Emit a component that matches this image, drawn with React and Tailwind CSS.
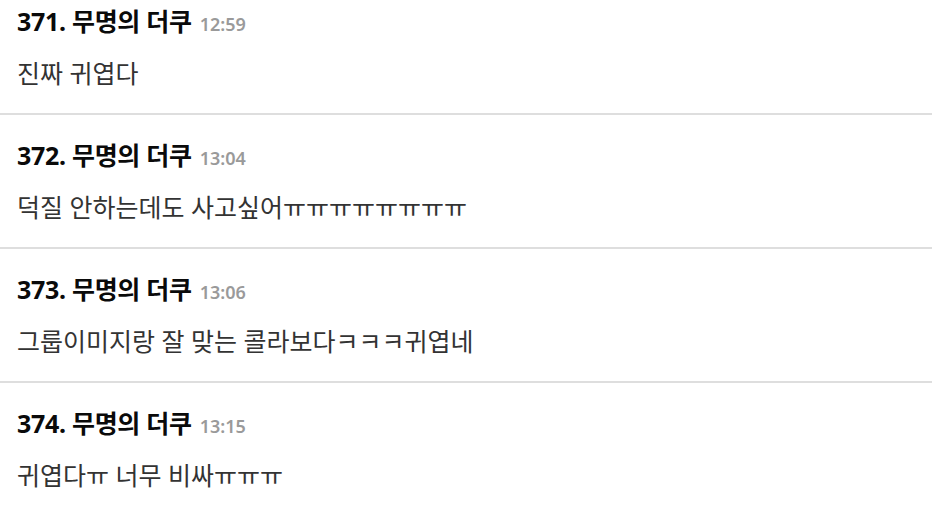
const comments = [
  { no: 371, name: "무명의 더쿠", time: "12:59", text: "진짜 귀엽다" },
  { no: 372, name: "무명의 더쿠", time: "13:04", text: "덕질 안하는데도 사고싶어ㅠㅠㅠㅠㅠㅠㅠㅠ" },
  { no: 373, name: "무명의 더쿠", time: "13:06", text: "그룹이미지랑 잘 맞는 콜라보다ㅋㅋㅋ귀엽네" },
  { no: 374, name: "무명의 더쿠", time: "13:15", text: "귀엽다ㅠ 너무 비싸ㅠㅠㅠ" },
];

function CommentItem({ data }) {
  return (
    <div className="border-b-2 border-[#dedede] px-[17px] pt-[26px] pb-[26px]">
      <div className="flex items-baseline gap-[8px] h-[28px]">
        <span className="text-[25px] font-bold text-[#0a0a0a] leading-[28px] tracking-[-0.3px]">
          {data.no}. {data.name}
        </span>
        <span className="text-[18px] font-semibold text-[#9a9a9a]">{data.time}</span>
      </div>
      <p className="mt-[24px] text-[25px] leading-[28px] text-[#333]">{data.text}</p>
    </div>
  );
}

export default function App() {
  return (
    <div
      className="w-[932px] h-[508px] overflow-hidden bg-white"
      style={{ fontFamily: '"Noto Sans", "Noto Sans CJK KR", sans-serif' }}
    >
      <div className="-mt-[19px]">
        {comments.map((item) => (
          <CommentItem data={item} key={item.no} />
        ))}
      </div>
    </div>
  );
}
